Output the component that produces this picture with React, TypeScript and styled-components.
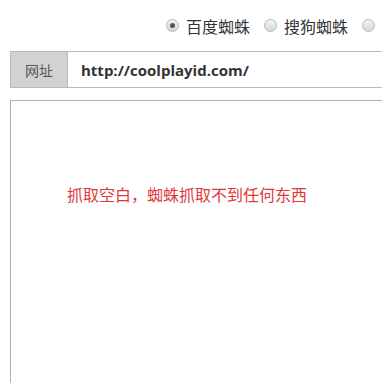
import styled, { createGlobalStyle } from "styled-components";

const GlobalStyle = createGlobalStyle`
  html, body {
    margin: 0;
    padding: 0;
    background: #fff;
    overflow: hidden;
  }
  body {
    font-family: "Noto Sans CJK SC", "Open Sans", sans-serif;
  }
`;

const Page = styled.div`
  width: 480px;
  padding-left: 10px;
  box-sizing: border-box;
`;

const SpiderBar = styled.div`
  height: 51px;
  display: flex;
  align-items: center;
  padding-left: 156px;
  gap: 14px;
`;

const Option = styled.label`
  display: flex;
  align-items: center;
  gap: 7px;
  font-size: 16px;
  color: #333;
  line-height: 1;
  white-space: nowrap;
`;

const RadioDot = styled.span<{ $checked?: boolean }>`
  width: 11px;
  height: 11px;
  border-radius: 50%;
  border: 1px solid #b8b8b8;
  background: linear-gradient(#f4f4f4, #d6d6d6);
  display: flex;
  align-items: center;
  justify-content: center;

  &::after {
    content: "";
    width: 5px;
    height: 5px;
    border-radius: 50%;
    background: ${(p) => (p.$checked ? "#555" : "transparent")};
  }
`;

const UrlRow = styled.div`
  display: flex;
  height: 37px;
  border: 1px solid #b9b9b9;
  border-right: none;
  box-sizing: border-box;
`;

const UrlLabel = styled.div`
  width: 56px;
  display: flex;
  align-items: center;
  justify-content: center;
  background: #d2d2d2;
  border-right: 1px solid #b9b9b9;
  color: #555;
  font-size: 14px;
`;

const UrlValue = styled.div`
  flex: 1;
  display: flex;
  align-items: center;
  padding-left: 13px;
  font-family: "Open Sans", "Noto Sans CJK SC", sans-serif;
  font-weight: 700;
  font-size: 15px;
  color: #333;
`;

const ResultBox = styled.div`
  margin-top: 12px;
  height: 300px;
  border: 1px solid #b0b0b0;
  border-right: none;
  padding: 83px 0 0 56px;
  box-sizing: border-box;
`;

const EmptyNote = styled.p`
  margin: 0;
  color: #e0383a;
  font-size: 16px;
  line-height: 20px;
`;

export default function App() {
  return (
    <>
      <GlobalStyle />
      <Page>
        <SpiderBar>
          <Option>
            <RadioDot $checked />
            百度蜘蛛
          </Option>
          <Option>
            <RadioDot />
            搜狗蜘蛛
          </Option>
          <Option>
            <RadioDot />
            谷歌蜘蛛
          </Option>
        </SpiderBar>
        <UrlRow>
          <UrlLabel>网址</UrlLabel>
          <UrlValue>http://coolplayid.com/</UrlValue>
        </UrlRow>
        <ResultBox>
          <EmptyNote>抓取空白，蜘蛛抓取不到任何东西</EmptyNote>
        </ResultBox>
      </Page>
    </>
  );
}
